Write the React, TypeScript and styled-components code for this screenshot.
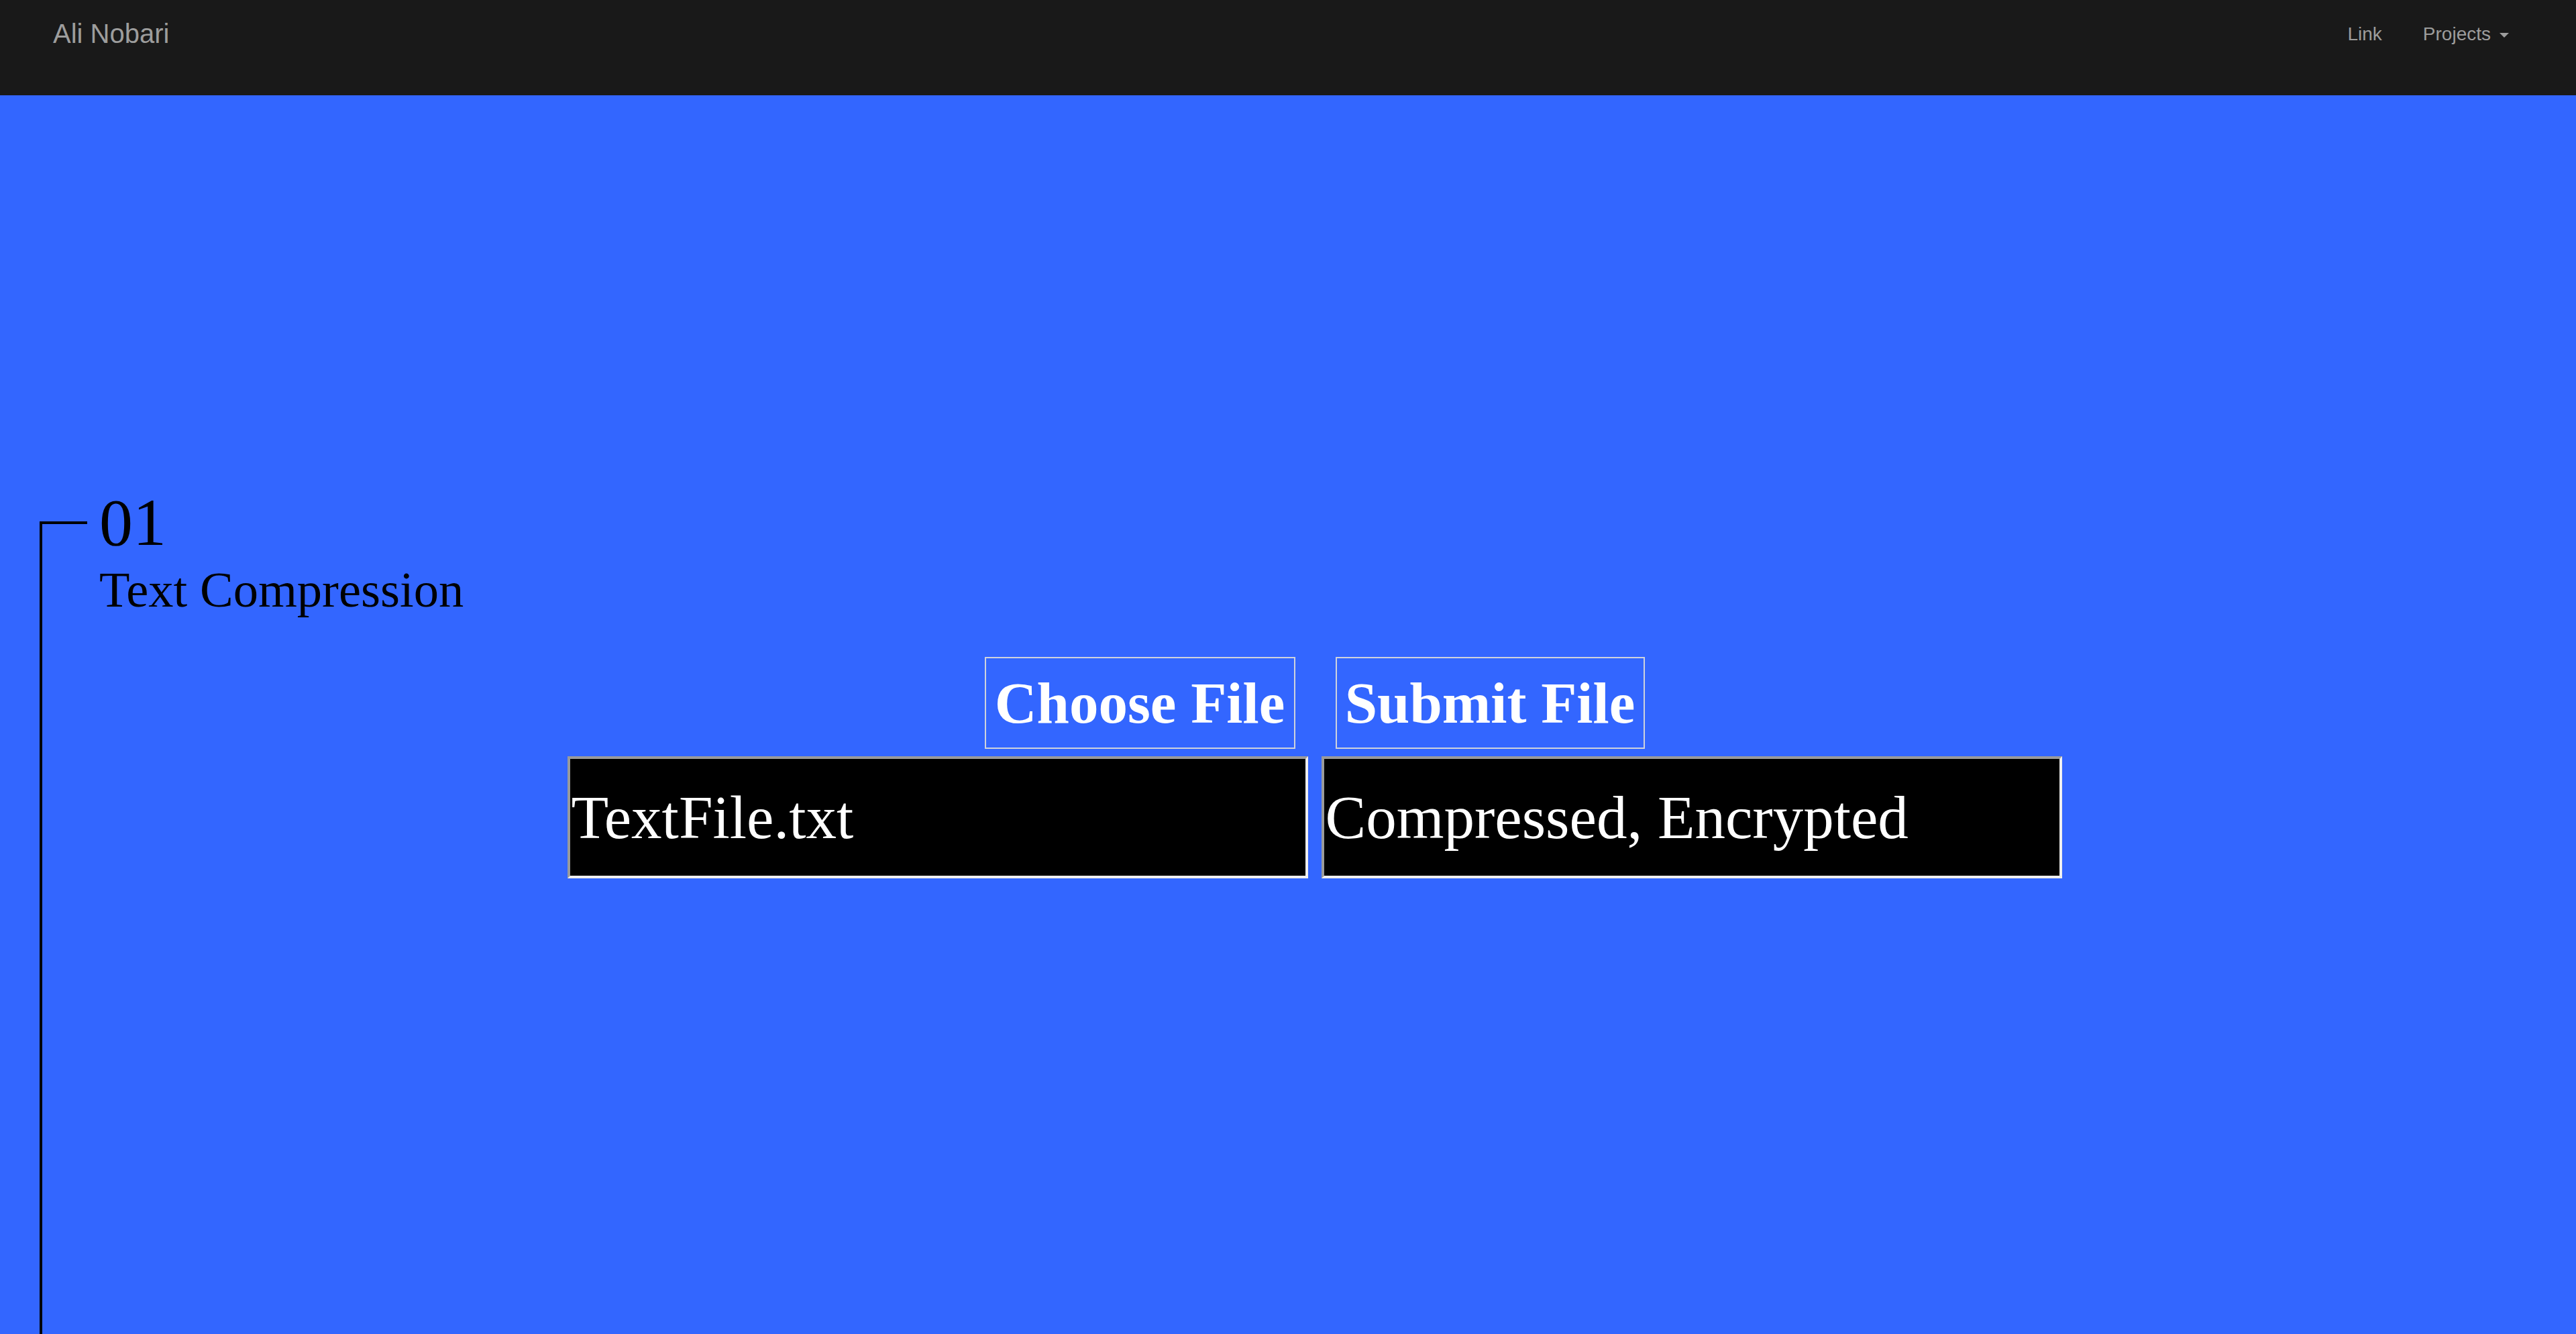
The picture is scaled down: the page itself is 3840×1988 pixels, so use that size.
import styled, { createGlobalStyle } from "styled-components";

const GlobalStyle = createGlobalStyle`
	html, body {
		margin: 0;
		padding: 0;
		background: #3366ff;
	}
	* {
		box-sizing: border-box;
	}
`;

const Page = styled.div`
	min-height: 100vh;
	display: flex;
	flex-direction: column;
	background: #3366ff;
`;

const NavBar = styled.nav`
	height: 142px;
	flex: none;
	display: flex;
	justify-content: space-between;
	align-items: flex-start;
	padding: 0 100px 0 79px;
	background: #191919;
	font-family: "Liberation Sans", Arial, sans-serif;
	color: #9d9d9d;
`;

const Brand = styled.a`
	padding-top: 30px;
	font-size: 40px;
	line-height: 40px;
	color: inherit;
	text-decoration: none;
`;

const NavLinks = styled.ul`
	display: flex;
	gap: 61px;
	margin: 0;
	padding: 37px 0 0;
	list-style: none;
`;

const NavItem = styled.li`
	display: flex;
	align-items: center;
	gap: 13px;
	font-size: 28px;
	line-height: 28px;
`;

const Caret = styled.span`
	width: 0;
	height: 0;
	margin-top: 2px;
	border-top: 7px solid #9d9d9d;
	border-left: 7.5px solid transparent;
	border-right: 7.5px solid transparent;
`;

const Main = styled.main`
	flex: 1;
	display: flex;
	flex-direction: column;
	padding: 635px 0 0 59px;
`;

const Timeline = styled.section`
	flex: 1;
	display: flex;
	flex-direction: column;
	border-left: 4px solid #000;
`;

const HeadRow = styled.div`
	display: flex;
	align-items: flex-start;
`;

const Tick = styled.span`
	flex: none;
	width: 67px;
	height: 4px;
	margin-right: 18px;
	background: #000;
`;

const HeadText = styled.div`
	margin-top: -48px;
	font-family: "Liberation Serif", "Times New Roman", serif;
	color: #000;
`;

const Number = styled.div`
	font-size: 100px;
	line-height: 100px;
`;

const Title = styled.h2`
	margin: 8px 0 0;
	font-size: 74.5px;
	line-height: 84px;
	font-weight: 400;
`;

const Controls = styled.div`
	display: flex;
	flex-direction: column;
	align-items: center;
	gap: 11px;
	margin-top: 58px;
	padding-left: 16px;
`;

const ButtonRow = styled.div`
	display: flex;
	gap: 60px;
`;

const FileButton = styled.button<{ $width: number }>`
	width: ${p => p.$width}px;
	height: 137px;
	display: flex;
	align-items: center;
	justify-content: center;
	padding: 0;
	border: 2px solid #cfd3dc;
	background: transparent;
	color: #fff;
	font-family: "Liberation Serif", "Times New Roman", serif;
	font-size: 87px;
	font-weight: 700;
	line-height: 87px;
	cursor: pointer;
`;

const OutputRow = styled.div`
	display: flex;
	gap: 20px;
`;

const OutputBox = styled.div`
	width: 1104px;
	height: 182px;
	display: flex;
	align-items: center;
	padding-left: 2px;
	background: #000;
	border: 4px solid;
	border-color: #9a9a9a #eeeeee #eeeeee #9a9a9a;
	color: #fff;
	font-family: "Liberation Serif", "Times New Roman", serif;
	font-size: 91px;
	white-space: nowrap;
	overflow: hidden;
`;

export default function App() {
	return (
		<Page>
			<GlobalStyle />
			<NavBar>
				<Brand href="#">Ali Nobari</Brand>
				<NavLinks>
					<NavItem>Link</NavItem>
					<NavItem>
						Projects
						<Caret />
					</NavItem>
				</NavLinks>
			</NavBar>
			<Main>
				<Timeline>
					<HeadRow>
						<Tick />
						<HeadText>
							<Number>01</Number>
							<Title>Text Compression</Title>
						</HeadText>
					</HeadRow>
					<Controls>
						<ButtonRow>
							<FileButton $width={463}>Choose File</FileButton>
							<FileButton $width={461}>Submit File</FileButton>
						</ButtonRow>
						<OutputRow>
							<OutputBox>TextFile.txt</OutputBox>
							<OutputBox>Compressed, Encrypted</OutputBox>
						</OutputRow>
					</Controls>
				</Timeline>
			</Main>
		</Page>
	);
}
